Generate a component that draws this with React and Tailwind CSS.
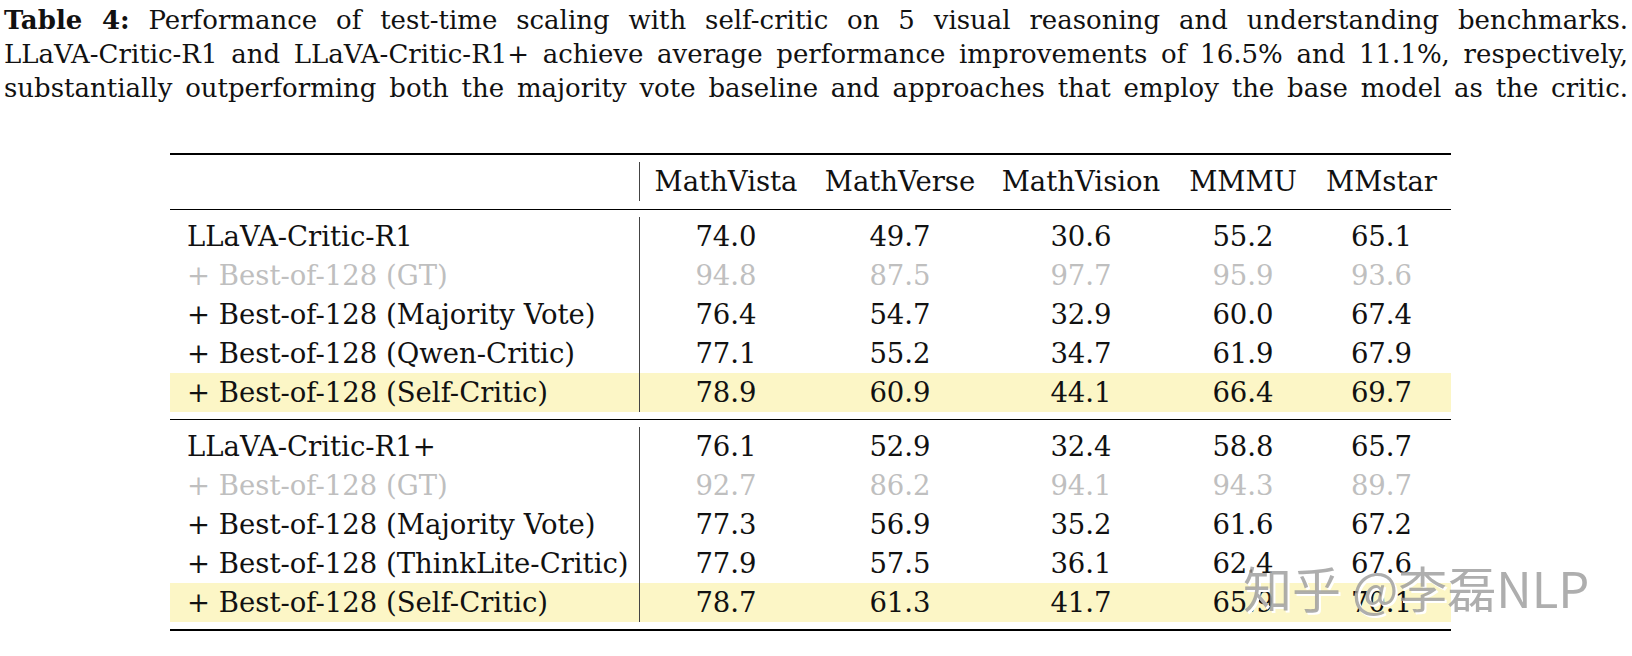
const headers = ['MathVista', 'MathVerse', 'MathVision', 'MMMU', 'MMstar'];

const sections = [
  [
    { name: 'LLaVA-Critic-R1', vals: ['74.0', '49.7', '30.6', '55.2', '65.1'] },
    { name: '+ Best-of-128 (GT)', vals: ['94.8', '87.5', '97.7', '95.9', '93.6'], muted: true },
    { name: '+ Best-of-128 (Majority Vote)', vals: ['76.4', '54.7', '32.9', '60.0', '67.4'] },
    { name: '+ Best-of-128 (Qwen-Critic)', vals: ['77.1', '55.2', '34.7', '61.9', '67.9'] },
    { name: '+ Best-of-128 (Self-Critic)', vals: ['78.9', '60.9', '44.1', '66.4', '69.7'], hl: true },
  ],
  [
    { name: 'LLaVA-Critic-R1+', vals: ['76.1', '52.9', '32.4', '58.8', '65.7'] },
    { name: '+ Best-of-128 (GT)', vals: ['92.7', '86.2', '94.1', '94.3', '89.7'], muted: true },
    { name: '+ Best-of-128 (Majority Vote)', vals: ['77.3', '56.9', '35.2', '61.6', '67.2'] },
    { name: '+ Best-of-128 (ThinkLite-Critic)', vals: ['77.9', '57.5', '36.1', '62.4', '67.6'] },
    { name: '+ Best-of-128 (Self-Critic)', vals: ['78.7', '61.3', '41.7', '65.9', '70.1'], hl: true },
  ],
];

const Row = ({ name, vals, muted, hl }) => (
  <div
    className={`grid grid-cols-[470px_172px_176px_186px_138px_139px] h-[39px] items-center ${
      hl ? 'bg-[#fcf6c6]' : ''
    } ${muted ? 'text-[#bfbfbf]' : 'text-[#111]'}`}
  >
    <div className="pl-[17px] h-full flex items-center border-r border-[#444] whitespace-nowrap">{name}</div>
    {vals.map((v, i) => (
      <div key={i} className="text-center">
        {v}
      </div>
    ))}
  </div>
);

export default function App() {
  return (
    <div className="relative w-[1632px] h-[656px] overflow-hidden bg-white text-[#111] font-['DejaVu_Serif',serif] text-[27.5px] leading-none">
      {/* caption */}
      <div className="px-[4px] pt-[3px] text-[26px]">
        <div className="h-[34px] leading-[34px] text-justify [text-align-last:justify]">
          <span className="font-bold">Table 4:</span> Performance of test-time scaling with self-critic on 5 visual reasoning and understanding benchmarks.
        </div>
        <div className="h-[34px] leading-[34px] text-justify [text-align-last:justify]">
          LLaVA-Critic-R1 and LLaVA-Critic-R1+ achieve average performance improvements of 16.5% and 11.1%, respectively,
        </div>
        <div className="h-[34px] leading-[34px] text-justify [text-align-last:justify]">
          substantially outperforming both the majority vote baseline and approaches that employ the base model as the critic.
        </div>
      </div>

      {/* table */}
      <div className="ml-[170px] mt-[48px] w-[1281px]">
        <div className="h-[2px] bg-black" />
        <div className="pt-[7px] pb-[8px]">
          <div className="grid grid-cols-[470px_172px_176px_186px_138px_139px] h-[39px] items-center">
            <div className="h-full border-r border-[#444]" />
            {headers.map((h) => (
              <div key={h} className="text-center">
                {h}
              </div>
            ))}
          </div>
        </div>
        {sections.map((rows, si) => (
          <div key={si}>
            <div className="h-px bg-black" />
            <div className="py-[7px]">
              {rows.map((r, ri) => (
                <Row key={ri} {...r} />
              ))}
            </div>
          </div>
        ))}
        <div className="h-[2px] bg-black" />
      </div>

      {/* watermark */}
      <div className="absolute left-[1243px] top-[562px] font-['Noto_Sans_CJK_SC',sans-serif] text-[49px] leading-none text-[#9a9a9a]/80 [text-shadow:2px_2px_0_#fff] whitespace-nowrap">
        知乎 @李磊NLP
      </div>
    </div>
  );
}
